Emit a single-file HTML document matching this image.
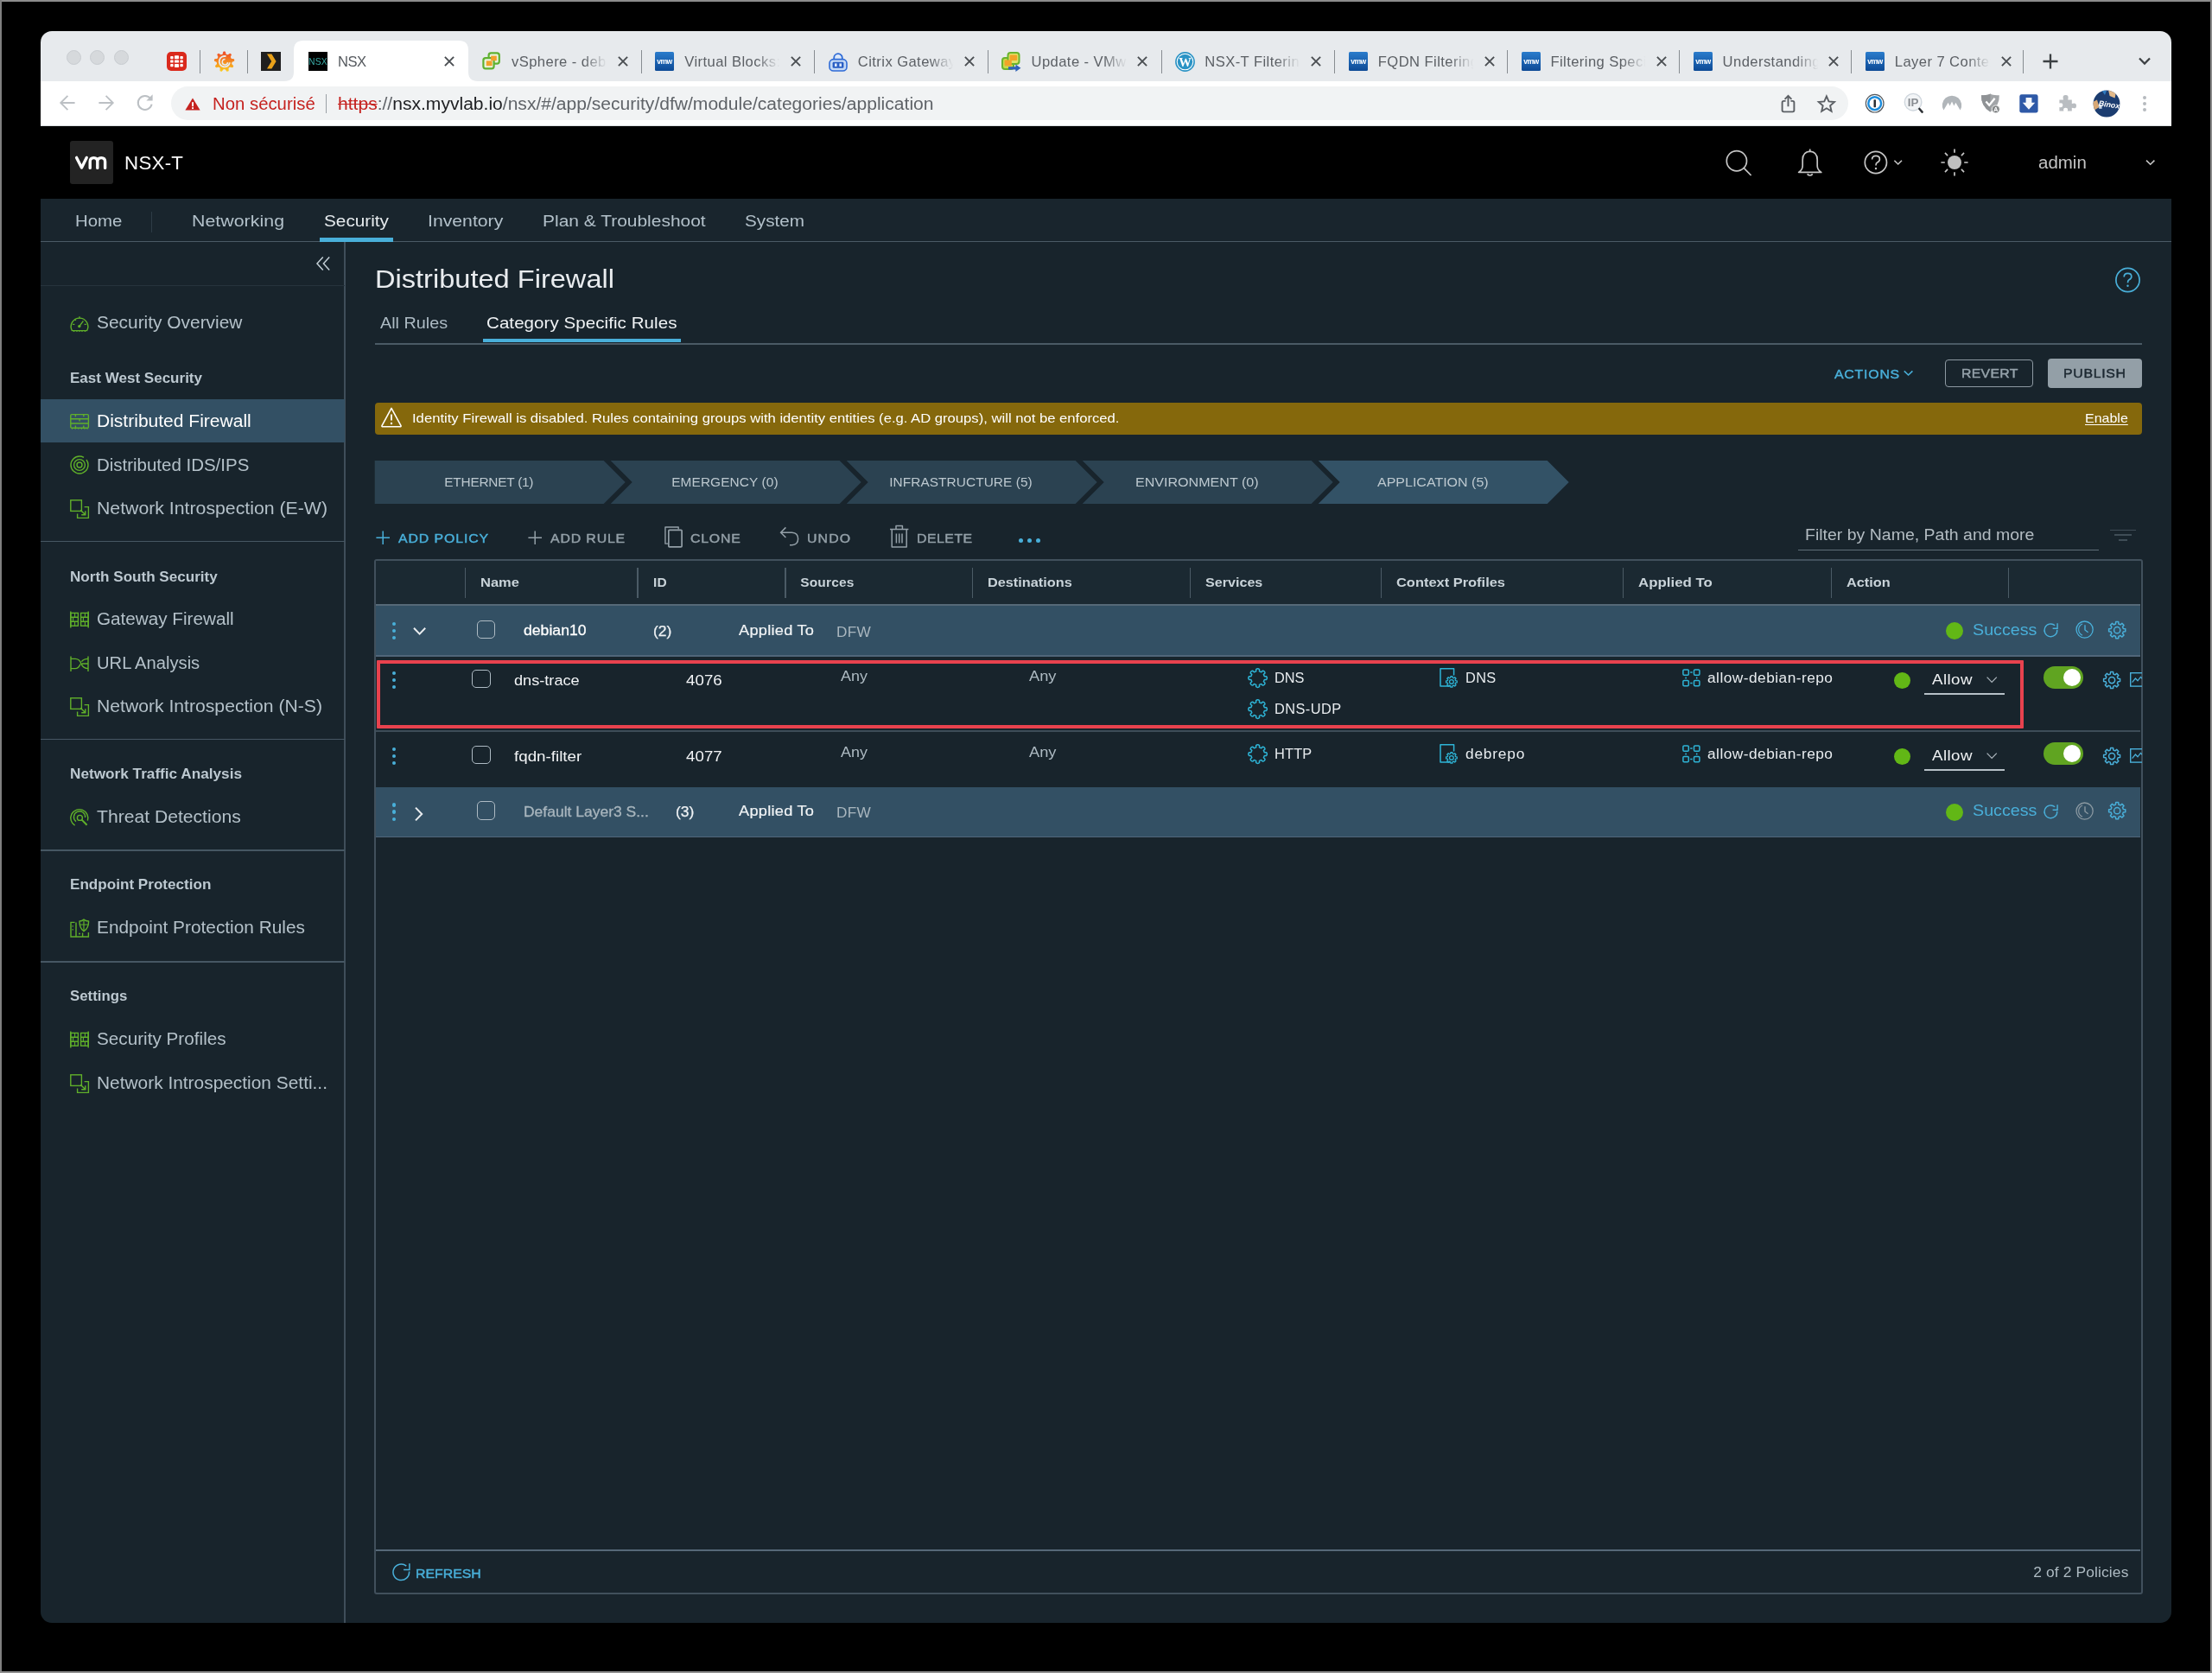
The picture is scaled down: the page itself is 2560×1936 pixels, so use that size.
<!DOCTYPE html>
<html><head><meta charset="utf-8"><title>NSX</title>
<style>
html,body{margin:0;padding:0;background:#000;}
body{width:2560px;height:1936px;position:relative;overflow:hidden;font-family:"Liberation Sans",sans-serif;}
#win{position:absolute;left:0;top:0;width:2560px;height:1936px;clip-path:inset(36px 47px 58px 47px round 13px);will-change:transform;}
#win div,#win svg,#win span.t,.edge{position:absolute;display:block;}
.t{white-space:nowrap;transform-origin:0 50%;}
svg{overflow:visible;}
</style></head>
<body>
<div class="edge" style="left:0;top:0;width:2560px;height:2px;background:#8c8c8c"></div><div class="edge" style="left:0;top:0;width:2px;height:1936px;background:#808080"></div><div class="edge" style="left:0;top:1934px;width:2560px;height:2px;background:#8f8f8f"></div><div class="edge" style="left:2558px;top:0;width:2px;height:1936px;background:#8a8a8a"></div>
<div id="win">
<div style="left:47px;top:36px;width:2466px;height:58px;background:#e7eaed;"></div>
<div style="left:47px;top:94px;width:2466px;height:52px;background:#ffffff;"></div>
<div style="left:76.6px;top:58.00000000000001px;width:15.2px;height:15.2px;border-radius:50%;background:#d6d9dc;border:0.8px solid #c8ccd0"></div>
<div style="left:104.19999999999999px;top:58.00000000000001px;width:15.2px;height:15.2px;border-radius:50%;background:#d6d9dc;border:0.8px solid #c8ccd0"></div>
<div style="left:132.2px;top:58.00000000000001px;width:15.2px;height:15.2px;border-radius:50%;background:#d6d9dc;border:0.8px solid #c8ccd0"></div>
<svg style="left:0px;top:0px;pointer-events:none" width="2560" height="146" viewBox="0 0 2560 146"><path d="M329 94 Q340 94 340 83 L340 58 Q340 47 351 47 L531 47 Q542 47 542 58 L542 83 Q542 94 553 94 Z" fill="#fff"/></svg>
<svg style="left:193px;top:60px;" width="23" height="22" viewBox="0 0 23 22"><rect x="0" y="0" width="23" height="22" rx="5" fill="#da291c"/><g fill="#fff"><rect x="4.2" y="5" width="3.4" height="3.2" rx="0.8"/><rect x="9" y="4.2" width="5" height="4" rx="0.8"/><rect x="15.4" y="5" width="3.4" height="3.2" rx="0.8"/><rect x="4.2" y="9.6" width="3.4" height="3" rx="0.6"/><rect x="9" y="9.6" width="5" height="3" rx="0.6"/><rect x="15.4" y="9.6" width="3.4" height="3" rx="0.6"/><rect x="4.2" y="14" width="3.4" height="3.2" rx="0.8"/><rect x="9" y="14" width="5" height="4" rx="0.8"/><rect x="15.4" y="14" width="3.4" height="3.2" rx="0.8"/></g></svg>
<div style="left:231.2px;top:58px;width:1.2px;height:27px;background:#878c91;"></div>
<svg style="left:248px;top:58.6px;" width="24" height="25" viewBox="0 0 24 25"><defs><linearGradient id="gf" x1="0" y1="1" x2="0" y2="0"><stop offset="0" stop-color="#fbc81a"/><stop offset="1" stop-color="#ee4a27"/></linearGradient></defs><path d="M10.0 4.2 L10.9 1.2 L12.3 1.2 L13.2 4.2 L15.7 5.1 L18.2 3.4 L19.3 4.3 L18.1 7.1 L19.4 9.4 L22.5 9.8 L22.7 11.2 L20.0 12.5 L19.5 15.1 L21.6 17.4 L20.9 18.6 L17.9 17.9 L15.9 19.6 L16.1 22.7 L14.8 23.1 L12.9 20.7 L10.3 20.7 L8.4 23.1 L7.1 22.7 L7.3 19.6 L5.3 17.9 L2.3 18.6 L1.6 17.4 L3.7 15.1 L3.2 12.5 L0.5 11.2 L0.7 9.8 L3.8 9.4 L5.1 7.1 L3.9 4.3 L5.0 3.4 L7.5 5.1 Z" fill="url(#gf)" stroke="url(#gf)" stroke-width="1.2" stroke-linejoin="round"/><path d="M13.6 6.2 A6.2 6.2 0 1 0 18 13.4" stroke="#e7eaed" stroke-width="1.9" fill="none"/><path d="M15.6 13.2 A3.2 3.2 0 1 1 12.6 9.6" stroke="#e7eaed" stroke-width="1.5" fill="none"/></svg>
<div style="left:285.9px;top:58px;width:1.2px;height:27px;background:#878c91;"></div>
<svg style="left:302px;top:60px;" width="23" height="22" viewBox="0 0 23 22"><rect width="23" height="22" fill="#1f1f1f"/><path d="M7 2.5 L12.4 2.5 L17.6 11 L12.4 19.5 L7 19.5 L12.2 11 Z" fill="#e9a21a"/></svg>
<svg style="left:357px;top:60px;" width="22" height="22" viewBox="0 0 22 22"><rect width="22" height="22" fill="#000"/><text x="11" y="14.6" font-family="Liberation Sans, sans-serif" font-size="10.4" text-anchor="middle" fill="#3aa9a4" letter-spacing="0.2">NSX</text></svg>
<span id="t1" class="t" style="letter-spacing:-0.562px;left:391px;top:61.0px;line-height:22px;font-size:16.6px;color:#55595e;font-weight:400;">NSX</span>
<svg style="left:512.8px;top:64.2px;" width="14" height="14" viewBox="0 0 14 14"><path d="M1.9000000000000004 1.9000000000000004 L12.1 12.1 M12.1 1.9000000000000004 L1.9000000000000004 12.1" stroke="#4a4e52" stroke-width="1.9" fill="none"/></svg>
<svg style="left:558.2px;top:60px;" width="23" height="24" viewBox="0 0 23 24"><rect x="7.6" y="1.4" width="12.2" height="12.2" rx="2.6" fill="#eaf4dd" stroke="#5fb130" stroke-width="2.2"/><rect x="1.4" y="7.2" width="12.2" height="12.2" rx="2.6" fill="#eaf4dd" stroke="#5fb130" stroke-width="2.2"/><rect x="10.2" y="4.6" width="6.6" height="5.6" fill="#f2a02a"/><rect x="4.8" y="10.4" width="6.8" height="5.8" fill="#f2a02a"/></svg>
<div style="left:592.0px;top:58px;width:113px;height:28px;overflow:hidden"><span id="t2" class="t" style="left:0px;top:3.4px;line-height:22px;font-size:16.6px;color:#5b5f64;letter-spacing:0.42px">vSphere - debian10</span><div style="left:83px;top:0;width:30px;height:28px;background:linear-gradient(90deg,rgba(231,234,237,0),#e7eaed 92%)"></div></div>
<svg style="left:713.8px;top:64.2px;" width="14" height="14" viewBox="0 0 14 14"><path d="M1.9000000000000004 1.9000000000000004 L12.1 12.1 M12.1 1.9000000000000004 L1.9000000000000004 12.1" stroke="#4a4e52" stroke-width="1.9" fill="none"/></svg>
<div style="left:741.6999999999999px;top:58px;width:1.2px;height:27px;background:#878c91;"></div>
<svg style="left:758px;top:60px;" width="22" height="24" viewBox="0 0 22 24"><defs><linearGradient id="vmwg" x1="0" y1="0" x2="0" y2="1"><stop offset="0" stop-color="#2a7ccc"/><stop offset="1" stop-color="#0d4a96"/></linearGradient></defs><rect width="22" height="22" rx="1.5" fill="url(#vmwg)"/><text x="11" y="13.6" font-family="Liberation Sans, sans-serif" font-size="8.6" font-weight="700" text-anchor="middle" fill="#fff" letter-spacing="-0.5">vmw</text></svg>
<div style="left:792.3px;top:58px;width:113px;height:28px;overflow:hidden"><span id="t3" class="t" style="left:0px;top:3.4px;line-height:22px;font-size:16.6px;color:#5b5f64;letter-spacing:0.42px">Virtual Blocks: VMw</span><div style="left:83px;top:0;width:30px;height:28px;background:linear-gradient(90deg,rgba(231,234,237,0),#e7eaed 92%)"></div></div>
<svg style="left:914.0999999999999px;top:64.2px;" width="14" height="14" viewBox="0 0 14 14"><path d="M1.9000000000000004 1.9000000000000004 L12.1 12.1 M12.1 1.9000000000000004 L1.9000000000000004 12.1" stroke="#4a4e52" stroke-width="1.9" fill="none"/></svg>
<div style="left:942.1999999999999px;top:58px;width:1.2px;height:27px;background:#878c91;"></div>
<svg style="left:958.5px;top:60px;" width="23" height="24" viewBox="0 0 23 24"><path d="M6.2 9.4 V7 a4.8 4.8 0 0 1 9.6 0 V9.4" fill="#dce8fa" stroke="#2f6bd6" stroke-width="1.8"/><rect x="1" y="8.6" width="20" height="13.4" rx="4.6" fill="#c5d9f5" stroke="#2f6bd6" stroke-width="1.6"/><rect x="4.6" y="11.8" width="12.8" height="7" rx="1.4" fill="#2a5fc4"/><rect x="7" y="13.4" width="2.6" height="3.6" fill="#dce8fa"/><rect x="12.4" y="13.4" width="2.6" height="3.6" fill="#dce8fa"/></svg>
<div style="left:992.8px;top:58px;width:113px;height:28px;overflow:hidden"><span id="t4" class="t" style="left:0px;top:3.4px;line-height:22px;font-size:16.6px;color:#5b5f64;letter-spacing:0.42px">Citrix Gateway</span><div style="left:83px;top:0;width:30px;height:28px;background:linear-gradient(90deg,rgba(231,234,237,0),#e7eaed 92%)"></div></div>
<svg style="left:1114.6px;top:64.2px;" width="14" height="14" viewBox="0 0 14 14"><path d="M1.9000000000000004 1.9000000000000004 L12.1 12.1 M12.1 1.9000000000000004 L1.9000000000000004 12.1" stroke="#4a4e52" stroke-width="1.9" fill="none"/></svg>
<div style="left:1142.9px;top:58px;width:1.2px;height:27px;background:#878c91;"></div>
<svg style="left:1158.5px;top:60px;" width="24" height="24" viewBox="0 0 24 24"><rect x="1" y="7" width="13" height="13" rx="3" fill="#c8d84a" stroke="#6ab32d" stroke-width="2"/><rect x="7.5" y="1" width="13" height="13" rx="3" fill="#dfe36a" stroke="#6ab32d" stroke-width="2"/><rect x="9.6" y="3.4" width="8.6" height="6.6" rx="1" fill="#f2a428"/><rect x="3.6" y="9.6" width="8.2" height="6.6" rx="1" fill="#f2a428"/><path d="M8 17.2 h8.4 v-2.6 l6 4.2 l-6 4.2 v-2.6 h-8.4 z" fill="#2e63b8"/></svg>
<div style="left:1193.5px;top:58px;width:113px;height:28px;overflow:hidden"><span id="t5" class="t" style="left:0px;top:3.4px;line-height:22px;font-size:16.6px;color:#5b5f64;letter-spacing:0.42px">Update - VMware</span><div style="left:83px;top:0;width:30px;height:28px;background:linear-gradient(90deg,rgba(231,234,237,0),#e7eaed 92%)"></div></div>
<svg style="left:1315.3px;top:64.2px;" width="14" height="14" viewBox="0 0 14 14"><path d="M1.9000000000000004 1.9000000000000004 L12.1 12.1 M12.1 1.9000000000000004 L1.9000000000000004 12.1" stroke="#4a4e52" stroke-width="1.9" fill="none"/></svg>
<div style="left:1343.7px;top:58px;width:1.2px;height:27px;background:#878c91;"></div>
<svg style="left:1359.5px;top:60px;" width="23" height="24" viewBox="0 0 23 24"><circle cx="11.5" cy="11.5" r="10.6" fill="#fff" stroke="#2a93c5" stroke-width="1.6"/><circle cx="11.5" cy="11.5" r="8.7" fill="#2a93c5"/><text x="11.5" y="16.6" font-family="Liberation Serif, serif" font-weight="700" font-size="14.6" fill="#fff" text-anchor="middle">W</text></svg>
<div style="left:1394.3px;top:58px;width:113px;height:28px;overflow:hidden"><span id="t6" class="t" style="left:0px;top:3.4px;line-height:22px;font-size:16.6px;color:#5b5f64;letter-spacing:0.42px">NSX-T Filtering</span><div style="left:83px;top:0;width:30px;height:28px;background:linear-gradient(90deg,rgba(231,234,237,0),#e7eaed 92%)"></div></div>
<svg style="left:1516.1px;top:64.2px;" width="14" height="14" viewBox="0 0 14 14"><path d="M1.9000000000000004 1.9000000000000004 L12.1 12.1 M12.1 1.9000000000000004 L1.9000000000000004 12.1" stroke="#4a4e52" stroke-width="1.9" fill="none"/></svg>
<div style="left:1544.2px;top:58px;width:1.2px;height:27px;background:#878c91;"></div>
<svg style="left:1560.5px;top:60px;" width="22" height="24" viewBox="0 0 22 24"><defs><linearGradient id="vmwg" x1="0" y1="0" x2="0" y2="1"><stop offset="0" stop-color="#2a7ccc"/><stop offset="1" stop-color="#0d4a96"/></linearGradient></defs><rect width="22" height="22" rx="1.5" fill="url(#vmwg)"/><text x="11" y="13.6" font-family="Liberation Sans, sans-serif" font-size="8.6" font-weight="700" text-anchor="middle" fill="#fff" letter-spacing="-0.5">vmw</text></svg>
<div style="left:1594.8px;top:58px;width:113px;height:28px;overflow:hidden"><span id="t7" class="t" style="left:0px;top:3.4px;line-height:22px;font-size:16.6px;color:#5b5f64;letter-spacing:0.42px">FQDN Filtering</span><div style="left:83px;top:0;width:30px;height:28px;background:linear-gradient(90deg,rgba(231,234,237,0),#e7eaed 92%)"></div></div>
<svg style="left:1716.6px;top:64.2px;" width="14" height="14" viewBox="0 0 14 14"><path d="M1.9000000000000004 1.9000000000000004 L12.1 12.1 M12.1 1.9000000000000004 L1.9000000000000004 12.1" stroke="#4a4e52" stroke-width="1.9" fill="none"/></svg>
<div style="left:1743.8000000000002px;top:58px;width:1.2px;height:27px;background:#878c91;"></div>
<svg style="left:1760.5px;top:60px;" width="22" height="24" viewBox="0 0 22 24"><defs><linearGradient id="vmwg" x1="0" y1="0" x2="0" y2="1"><stop offset="0" stop-color="#2a7ccc"/><stop offset="1" stop-color="#0d4a96"/></linearGradient></defs><rect width="22" height="22" rx="1.5" fill="url(#vmwg)"/><text x="11" y="13.6" font-family="Liberation Sans, sans-serif" font-size="8.6" font-weight="700" text-anchor="middle" fill="#fff" letter-spacing="-0.5">vmw</text></svg>
<div style="left:1794.4px;top:58px;width:113px;height:28px;overflow:hidden"><span id="t8" class="t" style="left:0px;top:3.4px;line-height:22px;font-size:16.6px;color:#5b5f64;letter-spacing:0.42px">Filtering Specific</span><div style="left:83px;top:0;width:30px;height:28px;background:linear-gradient(90deg,rgba(231,234,237,0),#e7eaed 92%)"></div></div>
<svg style="left:1916.2px;top:64.2px;" width="14" height="14" viewBox="0 0 14 14"><path d="M1.9000000000000004 1.9000000000000004 L12.1 12.1 M12.1 1.9000000000000004 L1.9000000000000004 12.1" stroke="#4a4e52" stroke-width="1.9" fill="none"/></svg>
<div style="left:1943.0px;top:58px;width:1.2px;height:27px;background:#878c91;"></div>
<svg style="left:1959.5px;top:60px;" width="22" height="24" viewBox="0 0 22 24"><defs><linearGradient id="vmwg" x1="0" y1="0" x2="0" y2="1"><stop offset="0" stop-color="#2a7ccc"/><stop offset="1" stop-color="#0d4a96"/></linearGradient></defs><rect width="22" height="22" rx="1.5" fill="url(#vmwg)"/><text x="11" y="13.6" font-family="Liberation Sans, sans-serif" font-size="8.6" font-weight="700" text-anchor="middle" fill="#fff" letter-spacing="-0.5">vmw</text></svg>
<div style="left:1993.6px;top:58px;width:113px;height:28px;overflow:hidden"><span id="t9" class="t" style="left:0px;top:3.4px;line-height:22px;font-size:16.6px;color:#5b5f64;letter-spacing:0.42px">Understanding</span><div style="left:83px;top:0;width:30px;height:28px;background:linear-gradient(90deg,rgba(231,234,237,0),#e7eaed 92%)"></div></div>
<svg style="left:2115.4px;top:64.2px;" width="14" height="14" viewBox="0 0 14 14"><path d="M1.9000000000000004 1.9000000000000004 L12.1 12.1 M12.1 1.9000000000000004 L1.9000000000000004 12.1" stroke="#4a4e52" stroke-width="1.9" fill="none"/></svg>
<div style="left:2142.2000000000003px;top:58px;width:1.2px;height:27px;background:#878c91;"></div>
<svg style="left:2158.5px;top:60px;" width="22" height="24" viewBox="0 0 22 24"><defs><linearGradient id="vmwg" x1="0" y1="0" x2="0" y2="1"><stop offset="0" stop-color="#2a7ccc"/><stop offset="1" stop-color="#0d4a96"/></linearGradient></defs><rect width="22" height="22" rx="1.5" fill="url(#vmwg)"/><text x="11" y="13.6" font-family="Liberation Sans, sans-serif" font-size="8.6" font-weight="700" text-anchor="middle" fill="#fff" letter-spacing="-0.5">vmw</text></svg>
<div style="left:2192.8px;top:58px;width:113px;height:28px;overflow:hidden"><span id="t10" class="t" style="left:0px;top:3.4px;line-height:22px;font-size:16.6px;color:#5b5f64;letter-spacing:0.42px">Layer 7 Context</span><div style="left:83px;top:0;width:30px;height:28px;background:linear-gradient(90deg,rgba(231,234,237,0),#e7eaed 92%)"></div></div>
<svg style="left:2314.6000000000004px;top:64.2px;" width="14" height="14" viewBox="0 0 14 14"><path d="M1.9000000000000004 1.9000000000000004 L12.1 12.1 M12.1 1.9000000000000004 L1.9000000000000004 12.1" stroke="#4a4e52" stroke-width="1.9" fill="none"/></svg>
<div style="left:2341.3px;top:58px;width:1.2px;height:27px;background:#878c91;"></div>
<svg style="left:2363px;top:61px;" width="20" height="20" viewBox="0 0 20 20"><path d="M10 1.5 V18.5 M1.5 10 H18.5" stroke="#3c4043" stroke-width="2.3" fill="none"/></svg>
<svg style="left:2474px;top:65px;" width="16" height="12" viewBox="0 0 16 12"><path d="M2 2.5 L8 8.6 L14 2.5" stroke="#3c4043" stroke-width="2.2" fill="none"/></svg>
<svg style="left:68px;top:108.4px;" width="20" height="22" viewBox="0 0 20 22"><path d="M18.6 11 H2.6 M10.4 2.8 L2.2 11 L10.4 19.2" stroke="#bcc0c4" stroke-width="1.8" fill="none"/></svg>
<svg style="left:113px;top:108.4px;" width="20" height="22" viewBox="0 0 20 22"><path d="M1.4 11 H17.4 M9.6 2.8 L17.8 11 L9.6 19.2" stroke="#bcc0c4" stroke-width="1.8" fill="none"/></svg>
<svg style="left:157px;top:107.4px;" width="22" height="24" viewBox="0 0 22 24"><path d="M17.2 7.2 A8 8 0 1 0 18.6 13.6" stroke="#bcc0c4" stroke-width="2" fill="none"/><path d="M19.6 2.2 V9.4 H12.4 Z" fill="#bcc0c4"/></svg>
<div style="left:197.5px;top:100.4px;width:1941.5px;height:39px;background:#f1f3f4;border-radius:19.5px"></div>
<svg style="left:214px;top:113px;" width="18" height="15" viewBox="0 0 18 15"><path d="M9 0.6 L17.6 14.6 H0.4 Z" fill="#c5221f"/><rect x="8.1" y="5.2" width="1.9" height="5" fill="#fff"/><rect x="8.1" y="11.2" width="1.9" height="1.9" fill="#fff"/></svg>
<span id="t11" class="t" style="transform:scaleX(1.0380);left:246px;top:107.9px;line-height:25px;font-size:19.6px;color:#c5221f;font-weight:400;">Non sécurisé</span>
<div style="left:376.6px;top:109px;width:1.5px;height:21.5px;background:#9aa0a6;"></div>
<span id="t12" class="t" style="transform:scaleX(1.0748);left:391px;top:107.9px;line-height:25px;font-size:19.6px;color:#5f6368;font-weight:400;"><span style="color:#c5221f;text-decoration:line-through">https</span><span style="color:#5f6368">://</span><span style="color:#202124">nsx.myvlab.io</span><span style="color:#5f6368">/nsx/#/app/security/dfw/module/categories/application</span></span>
<svg style="left:2058px;top:106px;" width="24" height="28" viewBox="0 0 24 28"><path d="M8.6 10.9 H6.4 Q4.6 10.9 4.6 12.7 V21.6 Q4.6 23.4 6.4 23.4 H16.6 Q18.4 23.4 18.4 21.6 V12.7 Q18.4 10.9 16.6 10.9 H14.4" stroke="#5b5f64" stroke-width="1.9" fill="none"/><path d="M11.5 17.2 V5.4 M7.6 8.8 L11.5 4.9 L15.4 8.8" stroke="#5b5f64" stroke-width="1.9" fill="none"/></svg>
<svg style="left:2101px;top:107px;" width="26" height="25" viewBox="0 0 26 25"><path d="M12.9 4.4 L15.5 10.4 L22 11 L17.1 15.3 L18.6 21.7 L12.9 18.3 L7.2 21.7 L8.7 15.3 L3.8 11 L10.3 10.4 Z" stroke="#5b5f64" stroke-width="1.9" fill="none" stroke-linejoin="miter"/></svg>
<svg style="left:2157px;top:107px;" width="26" height="26" viewBox="0 0 26 26"><circle cx="12.7" cy="12.7" r="10.3" fill="#fff" stroke="#55595d" stroke-width="1.2"/><circle cx="12.7" cy="12.7" r="7.4" fill="#fff" stroke="#1a8bdc" stroke-width="2.4"/><rect x="11.5" y="8.2" width="2.5" height="9" rx="0.6" fill="#2b2f33"/></svg>
<svg style="left:2199px;top:104px;" width="30" height="30" viewBox="0 0 30 30"><circle cx="15.1" cy="14.2" r="9.8" fill="#f3f5f7" stroke="#cfd6dd" stroke-width="1.4"/><text x="15.2" y="19" font-family="Liberation Sans, sans-serif" font-size="13.4" font-weight="700" text-anchor="middle" fill="#8a8e93">IP</text><path d="M22.4 22 L25.6 25.6" stroke="#2e3236" stroke-width="2.6" stroke-linecap="round"/></svg>
<svg style="left:2247px;top:109px;" width="24" height="20" viewBox="0 0 24 20"><path d="M2.4 18.6 A11.2 11.2 0 1 1 21.6 18.6 L16.4 9.8 L14.4 13.4 L12 8.6 L9.6 13.4 L7.6 9.8 Z" fill="#b1b6ba"/></svg>
<svg style="left:2291px;top:107px;" width="26" height="26" viewBox="0 0 26 26"><path d="M2 3.2 Q9.6 3.6 12.4 1.6 Q15.2 3.6 22.8 3.2 Q23.4 15.6 12.4 22.4 Q1.4 15.6 2 3.2 Z" fill="#a2a5a8"/><path d="M2 3.2 Q9.6 3.6 12.4 1.6 V22.4 Q1.4 15.6 2 3.2 Z" fill="#8f9295"/><path d="M7.4 10.6 L11.2 14.8 L17.6 6.8" stroke="#fff" stroke-width="2.3" fill="none"/><circle cx="18.8" cy="19.4" r="4.5" fill="#858889" stroke="#fff" stroke-width="0.8"/><text x="18.8" y="22" font-family="Liberation Sans, sans-serif" font-size="7" font-weight="700" text-anchor="middle" fill="#fff">A</text></svg>
<svg style="left:2337px;top:108.6px;" width="22" height="22" viewBox="0 0 22 22"><rect x="0.3" y="0.3" width="21.3" height="21.3" rx="2.4" fill="#2e59a7"/><path d="M7.6 4 H14.4 V9.8 H18.2 L11 17.8 L3.8 9.8 H7.6 Z" fill="#f4f7fb"/></svg>
<svg style="left:2382px;top:109px;" width="22" height="21" viewBox="0 0 22 21"><path d="M1.4 6.4 H6 Q4.4 1 8.6 1 Q12.8 1 11.2 6.4 H15.8 V11 Q21 9.4 21 13.4 Q21 17.4 15.8 15.8 V19.6 H10.8 Q12 15.8 8.6 15.8 Q5.2 15.8 6.4 19.6 H1.4 V15 Q5.4 16 5.4 12.8 Q5.4 9.6 1.4 10.6 Z" fill="#b9bdc1"/></svg>
<svg style="left:2421.5px;top:103.7px;" width="32" height="32" viewBox="0 0 32 32"><defs><clipPath id="avc"><circle cx="16" cy="16" r="15.4"/></clipPath></defs><circle cx="16" cy="16" r="15.4" fill="#1c3d70"/><g clip-path="url(#avc)"><path d="M0 14 L5 11.6 L7.6 20 L1 24 Z" fill="#d9a874"/><path d="M18 0 L27 2 L25.6 9.4 L19.6 7 Z" fill="#e2b98a"/><path d="M10 0 L16 1 L14 6 Z" fill="#2f7bc0"/><rect x="7.2" y="17.2" width="3.4" height="4.6" fill="#c9d6e6"/></g><text x="19.2" y="19.6" font-family="Liberation Sans, sans-serif" font-size="8.8" font-style="italic" font-weight="700" text-anchor="middle" fill="#fff" transform="rotate(8 16 16)">Binox</text></svg>
<div style="left:2479.6000000000004px;top:110.6px;width:4.4px;height:4.4px;border-radius:50%;background:#b6babe"></div>
<div style="left:2479.6000000000004px;top:117.7px;width:4.4px;height:4.4px;border-radius:50%;background:#b6babe"></div>
<div style="left:2479.6000000000004px;top:124.7px;width:4.4px;height:4.4px;border-radius:50%;background:#b6babe"></div>
<div style="left:47px;top:145px;width:2466px;height:1px;background:#dcdfe2;"></div>
<div style="left:47px;top:146px;width:2466px;height:84px;background:#000000;"></div>
<div style="left:81px;top:163px;width:50px;height:50px;background:#232323;border-radius:3px"></div>
<svg style="left:81px;top:163px;" width="50" height="50" viewBox="0 0 50 50"><path d="M7.6 19.4 L13.5 31 L19.2 19.4" stroke="#fff" stroke-width="3.4" fill="none" stroke-linecap="round" stroke-linejoin="round"/><path d="M23.2 31.4 V24 Q23.2 19.6 27.5 19.6 Q31.8 19.6 31.8 24 V31.4 M31.8 24 Q31.8 19.6 36.2 19.6 Q40.6 19.6 40.6 24 V31.4" stroke="#fff" stroke-width="3.4" fill="none" stroke-linecap="round" stroke-linejoin="round"/></svg>
<span id="t13" class="t" style="letter-spacing:0.273px;left:144px;top:173.8px;line-height:29px;font-size:22.3px;color:#fafafa;font-weight:400;">NSX-T</span>
<svg style="left:1994px;top:170px;" width="40" height="40" viewBox="0 0 40 40"><circle cx="15.9" cy="16.2" r="11.6" stroke="#c6c6c6" stroke-width="1.7" fill="none"/><path d="M24.4 24.6 L32.6 33" stroke="#c6c6c6" stroke-width="1.7" fill="none"/></svg>
<svg style="left:2078px;top:170px;" width="34" height="36" viewBox="0 0 34 36"><path d="M16.7 2.4 V5.2 M16.7 5.2 Q8.2 6 8.2 15 V22 Q8.2 26.4 3.6 29.4 H29.8 Q25.2 26.4 25.2 22 V15 Q25.2 6 16.7 5.2 Z" stroke="#c6c6c6" stroke-width="1.7" fill="none" stroke-linejoin="round"/><path d="M13.6 31.4 Q16.7 34.6 19.8 31.4" stroke="#c6c6c6" stroke-width="1.7" fill="none"/></svg>
<svg style="left:2156px;top:173px;" width="50" height="30" viewBox="0 0 50 30"><circle cx="14.9" cy="15" r="12.6" stroke="#c6c6c6" stroke-width="1.7" fill="none"/><path d="M10.6 11.6 Q10.6 7.4 15 7.4 Q19.4 7.4 19.4 11.2 Q19.4 13.6 16.6 15 Q15 15.8 15 18.4" stroke="#c6c6c6" stroke-width="1.7" fill="none"/><circle cx="15" cy="22" r="1.2" fill="#c6c6c6"/><path d="M36.4 12.8 L40.7 17 L45 12.8" stroke="#c6c6c6" stroke-width="1.6" fill="none"/></svg>
<svg style="left:2245.8px;top:172px;" width="32" height="32" viewBox="0 0 32 32"><circle cx="16" cy="16" r="8" fill="#bfbfbf"/><path d="M27.20 16.00 L31.60 16.00 M23.92 23.92 L27.03 27.03 M16.00 27.20 L16.00 31.60 M8.08 23.92 L4.97 27.03 M4.80 16.00 L0.40 16.00 M8.08 8.08 L4.97 4.97 M16.00 4.80 L16.00 0.40 M23.92 8.08 L27.03 4.97 " stroke="#c6c6c6" stroke-width="1.7" fill="none"/></svg>
<span id="t14" class="t" style="transform:scaleX(1.0454);left:2359.2px;top:176.3px;line-height:25px;font-size:19.6px;color:#c4c4c4;font-weight:400;">admin</span>
<svg style="left:2482px;top:183px;" width="14" height="10" viewBox="0 0 14 10"><path d="M2 2.6 L6.7 7.2 L11.4 2.6" stroke="#c6c6c6" stroke-width="1.6" fill="none"/></svg>
<div style="left:47px;top:230px;width:2466px;height:50px;background:#19252d;"></div>
<div style="left:47px;top:279px;width:2466px;height:1.4px;background:#4a5a65;"></div>
<span id="t15" class="t" style="transform:scaleX(1.0628);left:86.9px;top:243.0px;line-height:25px;font-size:19.2px;color:#b3c1ca;font-weight:400;">Home</span>
<div style="left:174.6px;top:244.6px;width:1.2px;height:24px;background:#2d3c46;"></div>
<span id="t16" class="t" style="letter-spacing:0.046px;transform:scaleX(1.1100);left:221.7px;top:243.0px;line-height:25px;font-size:19.2px;color:#b3c1ca;font-weight:400;">Networking</span>
<span id="t17" class="t" style="transform:scaleX(1.0821);left:374.8px;top:243.0px;line-height:25px;font-size:19.2px;color:#e6ebee;font-weight:400;">Security</span>
<span id="t18" class="t" style="transform:scaleX(1.1059);left:495.2px;top:243.0px;line-height:25px;font-size:19.2px;color:#b3c1ca;font-weight:400;">Inventory</span>
<span id="t19" class="t" style="transform:scaleX(1.0919);left:627.9px;top:243.0px;line-height:25px;font-size:19.2px;color:#b3c1ca;font-weight:400;">Plan &amp; Troubleshoot</span>
<span id="t20" class="t" style="transform:scaleX(1.0784);left:861.7px;top:243.0px;line-height:25px;font-size:19.2px;color:#b3c1ca;font-weight:400;">System</span>
<div style="left:370px;top:275.2px;width:85px;height:4.8px;background:#49afd9;"></div>
<div style="left:47px;top:280.4px;width:2466px;height:1598px;background:#18242c;"></div>
<div style="left:398.2px;top:280.4px;width:2px;height:1598px;background:#3f4e5a;"></div>
<svg style="left:364.6px;top:296.2px;" width="20" height="18" viewBox="0 0 20 18"><path d="M8.8 1.6 L2 9 L8.8 16.4 M16.2 1.6 L9.4 9 L16.2 16.4" stroke="#c3cfd6" stroke-width="1.5" fill="none"/></svg>
<div style="left:47px;top:330.2px;width:352px;height:1px;background:#26333c;"></div>
<svg style="left:81px;top:363.0px;" width="22" height="22" viewBox="0 0 22 22"><path d="M2.4 19.6 A9.8 9.8 0 1 1 19.6 19.6 Z" stroke="#60b02a" stroke-width="1.4" fill="none" stroke-linejoin="round"/><path d="M11 14.4 L15.4 8.4" stroke="#60b02a" stroke-width="1.4" fill="none"/><circle cx="10.8" cy="14.6" r="1.7" fill="#60b02a"/><path d="M11 3.2 V5.6 M3.2 12.4 H5.4 M16.6 12.4 H18.8 M5.4 6.4 L6.8 7.8" stroke="#60b02a" stroke-width="1.4" fill="none"/><path d="M4.6 19.6 V21 M8 19.6 V21 M11 19.6 V21 M14 19.6 V21 M17.4 19.6 V21" stroke="#60b02a" stroke-width="1.2"/></svg>
<span id="t21" class="t" style="transform:scaleX(1.0666);left:112.2px;top:361.1px;line-height:25px;font-size:19.6px;color:#b4c1c9;font-weight:400;">Security Overview</span>
<span id="t22" class="t" style="transform:scaleX(1.0519);left:81px;top:426.9px;line-height:21px;font-size:16.2px;color:#bcc8d0;font-weight:700;">East West Security</span>
<div style="left:47px;top:462px;width:352px;height:50px;background:#335064;"></div>
<svg style="left:81px;top:477.0px;" width="22" height="22" viewBox="0 0 22 22"><rect x="0.8" y="2.6" width="20.6" height="15.6" rx="1.2" stroke="#60b02a" stroke-width="1.4" fill="none"/><path d="M0.8 7.8 H21.4 M0.8 13 H21.4 M6.4 2.6 V5.2 M15.8 2.6 V5.2 M11.1 7.8 V10.6 M6.4 15.4 V18.2 M15.8 15.4 V18.2" stroke="#60b02a" stroke-width="1.4" fill="none"/><path d="M2.6 18.2 V19.8 M6.2 18.2 V19.8 M9.8 18.2 V19.8 M13.4 18.2 V19.8 M17 18.2 V19.8 M20 18.2 V19.8" stroke="#60b02a" stroke-width="1.1"/></svg>
<span id="t23" class="t" style="transform:scaleX(1.0732);left:112.2px;top:475.1px;line-height:25px;font-size:19.6px;color:#ffffff;font-weight:400;">Distributed Firewall</span>
<svg style="left:81px;top:527.4px;" width="22" height="22" viewBox="0 0 22 22"><circle cx="11" cy="11" r="10" stroke="#60b02a" stroke-width="1.4" fill="none" stroke-dasharray="52 4"/><circle cx="11" cy="11" r="6.4" stroke="#60b02a" stroke-width="1.4" fill="none"/><circle cx="11" cy="11" r="3" stroke="#60b02a" stroke-width="1.4" fill="none"/></svg>
<span id="t24" class="t" style="transform:scaleX(1.0445);left:112.2px;top:525.5px;line-height:25px;font-size:19.6px;color:#b4c1c9;font-weight:400;">Distributed IDS/IPS</span>
<svg style="left:81px;top:577.6px;" width="22" height="22" viewBox="0 0 22 22"><rect x="0.8" y="0.8" width="12.6" height="12.6" stroke="#60b02a" stroke-width="1.4" fill="none"/><path d="M16.6 8.6 H21.4 V21.4 H8.6 V16.4" stroke="#60b02a" stroke-width="1.4" fill="none"/><path d="M12.2 12.2 L17.6 17.6 M17.8 13.2 V17.8 H13.2" stroke="#60b02a" stroke-width="1.4" fill="none"/></svg>
<span id="t25" class="t" style="transform:scaleX(1.0850);left:112.2px;top:575.7px;line-height:25px;font-size:19.6px;color:#b4c1c9;font-weight:400;">Network Introspection (E-W)</span>
<div style="left:47px;top:625.9px;width:352px;height:1.5px;background:#465763;"></div>
<span id="t26" class="t" style="transform:scaleX(1.0544);left:81px;top:656.8px;line-height:21px;font-size:16.2px;color:#bcc8d0;font-weight:700;">North South Security</span>
<svg style="left:81px;top:706.3px;" width="22" height="22" viewBox="0 0 22 22"><rect x="0.8" y="3.4" width="8.6" height="14.8" stroke="#60b02a" stroke-width="1.4" fill="none"/><rect x="12.6" y="3.4" width="8.6" height="14.8" stroke="#60b02a" stroke-width="1.4" fill="none"/><path d="M0.8 8.3 H9.4 M0.8 13.3 H9.4 M12.6 8.3 H21.2 M12.6 13.3 H21.2" stroke="#60b02a" stroke-width="1.4" fill="none"/><path d="M5.6 3.4 V8.3 M3.6 8.3 V13.3 M5.6 13.3 V18.2 M17.4 3.4 V8.3 M15.4 8.3 V13.3 M17.4 13.3 V18.2" stroke="#60b02a" stroke-width="1.1" fill="none"/><path d="M0.8 1.6 V20.6 M21.2 1.6 V20.6" stroke="#60b02a" stroke-width="1.4" fill="none"/></svg>
<span id="t27" class="t" style="transform:scaleX(1.0555);left:112.2px;top:704.4px;line-height:25px;font-size:19.6px;color:#b4c1c9;font-weight:400;">Gateway Firewall</span>
<svg style="left:81px;top:756.7px;" width="22" height="22" viewBox="0 0 22 22"><path d="M1 2.4 V20 M21 2.4 V20" stroke="#60b02a" stroke-width="1.4" fill="none"/><path d="M1 5.4 H6 Q11 5.4 13 11 Q15 16.6 21 16.6 M1 16.6 H6 Q10 16.6 12 11.4 M13.4 8.6 Q15.6 5.4 21 5.4 M14 11 H21" stroke="#60b02a" stroke-width="1.4" fill="none"/></svg>
<span id="t28" class="t" style="transform:scaleX(1.0294);left:112.2px;top:754.8px;line-height:25px;font-size:19.6px;color:#b4c1c9;font-weight:400;">URL Analysis</span>
<svg style="left:81px;top:807.0px;" width="22" height="22" viewBox="0 0 22 22"><rect x="0.8" y="0.8" width="12.6" height="12.6" stroke="#60b02a" stroke-width="1.4" fill="none"/><path d="M16.6 8.6 H21.4 V21.4 H8.6 V16.4" stroke="#60b02a" stroke-width="1.4" fill="none"/><path d="M12.2 12.2 L17.6 17.6 M17.8 13.2 V17.8 H13.2" stroke="#60b02a" stroke-width="1.4" fill="none"/></svg>
<span id="t29" class="t" style="transform:scaleX(1.0797);left:112.2px;top:805.1px;line-height:25px;font-size:19.6px;color:#b4c1c9;font-weight:400;">Network Introspection (N-S)</span>
<div style="left:47px;top:854.9px;width:352px;height:1.5px;background:#465763;"></div>
<span id="t30" class="t" style="transform:scaleX(1.0618);left:81px;top:885.3px;line-height:21px;font-size:16.2px;color:#bcc8d0;font-weight:700;">Network Traffic Analysis</span>
<svg style="left:81px;top:934.6px;" width="22" height="22" viewBox="0 0 22 22"><path d="M5.6 20.2 A10 10 0 1 1 20.4 14.6" stroke="#60b02a" stroke-width="1.4" fill="none"/><path d="M7 15.6 A6.6 6.6 0 1 1 17.6 11" stroke="#60b02a" stroke-width="1.4" fill="none"/><circle cx="11.4" cy="11.4" r="3" stroke="#60b02a" stroke-width="1.4" fill="none"/><path d="M13.6 13.6 L19.6 19.8" stroke="#60b02a" stroke-width="2"/></svg>
<span id="t31" class="t" style="transform:scaleX(1.0779);left:112.2px;top:932.7px;line-height:25px;font-size:19.6px;color:#b4c1c9;font-weight:400;">Threat Detections</span>
<div style="left:47px;top:983.0999999999999px;width:352px;height:1.5px;background:#465763;"></div>
<span id="t32" class="t" style="transform:scaleX(1.0564);left:81px;top:1013.3px;line-height:21px;font-size:16.2px;color:#bcc8d0;font-weight:700;">Endpoint Protection</span>
<svg style="left:81px;top:1063.3px;" width="22" height="22" viewBox="0 0 22 22"><path d="M5.6 4.4 H1 V21 H21.4 V16" stroke="#60b02a" stroke-width="1.4" fill="none"/><path d="M7 21 V4.4 M14.6 21 V16.6" stroke="#60b02a" stroke-width="1.4" fill="none"/><path d="M11 3 Q14 3 16 1 Q18 3 21.6 3 Q21.6 11.4 16 14.6 Q11 11.4 11 3 Z" stroke="#60b02a" stroke-width="1.4" fill="none" stroke-linejoin="round"/><path d="M16 1.4 V14 M11.4 7 H21.2" stroke="#60b02a" stroke-width="1.2"/><circle cx="11" cy="17.6" r="1" fill="#60b02a"/><path d="M3.2 8 V9.6 M3.2 12 V13.6" stroke="#60b02a" stroke-width="1.2"/></svg>
<span id="t33" class="t" style="transform:scaleX(1.0637);left:112.2px;top:1061.4px;line-height:25px;font-size:19.6px;color:#b4c1c9;font-weight:400;">Endpoint Protection Rules</span>
<div style="left:47px;top:1112.2px;width:352px;height:1.5px;background:#465763;"></div>
<span id="t34" class="t" style="transform:scaleX(1.0382);left:81px;top:1142.3px;line-height:21px;font-size:16.2px;color:#bcc8d0;font-weight:700;">Settings</span>
<svg style="left:81px;top:1192.0px;" width="22" height="22" viewBox="0 0 22 22"><rect x="0.8" y="3.4" width="8.6" height="14.8" stroke="#60b02a" stroke-width="1.4" fill="none"/><rect x="12.6" y="3.4" width="8.6" height="14.8" stroke="#60b02a" stroke-width="1.4" fill="none"/><path d="M0.8 8.3 H9.4 M0.8 13.3 H9.4 M12.6 8.3 H21.2 M12.6 13.3 H21.2" stroke="#60b02a" stroke-width="1.4" fill="none"/><path d="M5.6 3.4 V8.3 M3.6 8.3 V13.3 M5.6 13.3 V18.2 M17.4 3.4 V8.3 M15.4 8.3 V13.3 M17.4 13.3 V18.2" stroke="#60b02a" stroke-width="1.1" fill="none"/><path d="M0.8 1.6 V20.6 M21.2 1.6 V20.6" stroke="#60b02a" stroke-width="1.4" fill="none"/></svg>
<span id="t35" class="t" style="transform:scaleX(1.0568);left:112.2px;top:1190.1px;line-height:25px;font-size:19.6px;color:#b4c1c9;font-weight:400;">Security Profiles</span>
<svg style="left:81px;top:1242.6px;" width="22" height="22" viewBox="0 0 22 22"><rect x="0.8" y="0.8" width="12.6" height="12.6" stroke="#60b02a" stroke-width="1.4" fill="none"/><path d="M16.6 8.6 H21.4 V21.4 H8.6 V16.4" stroke="#60b02a" stroke-width="1.4" fill="none"/><path d="M12.2 12.2 L17.6 17.6 M17.8 13.2 V17.8 H13.2" stroke="#60b02a" stroke-width="1.4" fill="none"/></svg>
<span id="t36" class="t" style="transform:scaleX(1.0659);left:112.2px;top:1240.7px;line-height:25px;font-size:19.6px;color:#b4c1c9;font-weight:400;">Network Introspection Setti...</span>
<span id="t37" class="t" style="transform:scaleX(1.1008);left:434px;top:303.9px;line-height:38px;font-size:29.6px;color:#e9ecef;font-weight:400;">Distributed Firewall</span>
<svg style="left:2446px;top:308px;" width="32" height="32" viewBox="0 0 32 32"><circle cx="16.5" cy="16" r="13.6" stroke="#49afd9" stroke-width="1.7" fill="none"/><path d="M12.2 12.6 Q12.2 8.4 16.5 8.4 Q20.8 8.4 20.8 12 Q20.8 14.4 18 15.8 Q16.5 16.6 16.5 19.2" stroke="#49afd9" stroke-width="1.7" fill="none"/><circle cx="16.5" cy="22.8" r="1.2" fill="#49afd9"/></svg>
<span id="t38" class="t" style="transform:scaleX(1.0712);left:439.6px;top:362.3px;line-height:24px;font-size:18.5px;color:#adbbc4;font-weight:400;">All Rules</span>
<span id="t39" class="t" style="letter-spacing:0.052px;transform:scaleX(1.1100);left:563px;top:362.3px;line-height:24px;font-size:18.5px;color:#f0f3f5;font-weight:400;">Category Specific Rules</span>
<div style="left:434px;top:397.3px;width:2045px;height:1.4px;background:#4a5a65;"></div>
<div style="left:558.9px;top:392.3px;width:229.1px;height:4.2px;background:#49afd9;"></div>
<span id="t40" class="t" style="letter-spacing:0.765px;transform:scaleX(1.0300);left:2122.8px;top:422.5px;line-height:20px;font-size:15.4px;color:#49afd9;font-weight:400;-webkit-text-stroke:0.45px currentColor;">ACTIONS</span>
<svg style="left:2202px;top:427.2px;" width="14" height="10" viewBox="0 0 14 10"><path d="M1.8 2.4 L6.6 7 L11.4 2.4" stroke="#49afd9" stroke-width="1.6" fill="none"/></svg>
<div style="left:2250.7px;top:415.6px;width:100.4px;height:30px;border:1.6px solid #8d99a2;border-radius:4px"></div>
<span id="t41" class="t" style="letter-spacing:0.268px;transform:scaleX(1.0300);left:2269.5px;top:422.3px;line-height:20px;font-size:15.4px;color:#96a3ab;font-weight:400;-webkit-text-stroke:0.45px currentColor;">REVERT</span>
<div style="left:2370px;top:415.4px;width:109px;height:33.3px;background:#939fa7;border-radius:4px"></div>
<span id="t42" class="t" style="letter-spacing:0.671px;transform:scaleX(1.0300);left:2388.4px;top:422.3px;line-height:20px;font-size:15.4px;color:#1c2831;font-weight:400;-webkit-text-stroke:0.45px currentColor;">PUBLISH</span>
<div style="left:434px;top:466.2px;width:2045px;height:36.4px;background:#85680c;border-radius:4px"></div>
<svg style="left:440px;top:470.4px;" width="26" height="26" viewBox="0 0 26 26"><path d="M13 2.4 L24 22.6 Q24.4 23.8 23 23.8 H3 Q1.6 23.8 2 22.6 Z" stroke="#fff" stroke-width="1.6" fill="none" stroke-linejoin="round"/><path d="M13 9.4 V16.6" stroke="#fff" stroke-width="1.8"/><circle cx="13" cy="20" r="1.2" fill="#fff"/></svg>
<span id="t43" class="t" style="transform:scaleX(1.1092);left:476.7px;top:474.1px;line-height:20px;font-size:15px;color:#ffffff;font-weight:400;">Identity Firewall is disabled. Rules containing groups with identity entities (e.g. AD groups), will not be enforced.</span>
<span id="t44" class="t" style="transform:scaleX(1.0660);left:2412.7px;top:474.1px;line-height:20px;font-size:15px;color:#ffffff;font-weight:400;text-decoration:underline;text-underline-offset:2px;">Enable</span>
<svg style="left:0px;top:0px;" width="2560" height="600" viewBox="0 0 2560 600"><path d="M433.7 533 L698.7 533 L723.7 558 L698.7 583 L433.7 583 Z" fill="#2b4251"/><path d="M706.7 533 L971.7 533 L996.7 558 L971.7 583 L706.7 583 L731.7 558 Z" fill="#2b4251"/><path d="M979.7 533 L1244.7 533 L1269.7 558 L1244.7 583 L979.7 583 L1004.7 558 Z" fill="#2b4251"/><path d="M1252.7 533 L1517.7 533 L1542.7 558 L1517.7 583 L1252.7 583 L1277.7 558 Z" fill="#2b4251"/><path d="M1525.7 533 L1790.7 533 L1815.7 558 L1790.7 583 L1525.7 583 L1550.7 558 Z" fill="#335266"/></svg>
<span id="t45" class="t" style="letter-spacing:-0.233px;left:514.3px;top:547.7px;line-height:20px;font-size:15.4px;color:#bcc8cf;font-weight:400;">ETHERNET (1)</span>
<span id="t46" class="t" style="letter-spacing:0.115px;left:777.2px;top:547.7px;line-height:20px;font-size:15.4px;color:#bcc8cf;font-weight:400;">EMERGENCY (0)</span>
<span id="t47" class="t" style="letter-spacing:0.078px;left:1029.2px;top:547.7px;line-height:20px;font-size:15.4px;color:#bcc8cf;font-weight:400;">INFRASTRUCTURE (5)</span>
<span id="t48" class="t" style="transform:scaleX(1.0443);left:1313.6px;top:547.7px;line-height:20px;font-size:15.4px;color:#bcc8cf;font-weight:400;">ENVIRONMENT (0)</span>
<span id="t49" class="t" style="transform:scaleX(1.0395);left:1593.6px;top:547.7px;line-height:20px;font-size:15.4px;color:#bcc8cf;font-weight:400;">APPLICATION (5)</span>
<svg style="left:435px;top:614.1999999999999px;" width="16.4" height="16.4" viewBox="0 0 16.4 16.4"><path d="M8.2 0.4 V16 M0.4 8.2 H16" stroke="#49afd9" stroke-width="1.5" fill="none"/></svg>
<span id="t50" class="t" style="letter-spacing:0.881px;transform:scaleX(1.0300);left:460.7px;top:612.6px;line-height:20px;font-size:15.4px;color:#49afd9;font-weight:400;-webkit-text-stroke:0.45px currentColor;">ADD POLICY</span>
<svg style="left:610.8px;top:614.1999999999999px;" width="16.4" height="16.4" viewBox="0 0 16.4 16.4"><path d="M8.2 0.4 V16 M0.4 8.2 H16" stroke="#94a0a8" stroke-width="1.5" fill="none"/></svg>
<span id="t51" class="t" style="letter-spacing:0.837px;transform:scaleX(1.0300);left:636.5px;top:612.6px;line-height:20px;font-size:15.4px;color:#94a0a8;font-weight:400;-webkit-text-stroke:0.45px currentColor;">ADD RULE</span>
<svg style="left:768.8px;top:608.6px;" width="21.4" height="25.2" viewBox="0 0 23 27"><path d="M4.4 21.6 H1 V1 H17.4 V3.6" stroke="#94a0a8" stroke-width="1.5" fill="none" stroke-linejoin="round"/><rect x="5.2" y="4.6" width="16.4" height="21" rx="1" stroke="#94a0a8" stroke-width="1.8" fill="none"/></svg>
<span id="t52" class="t" style="letter-spacing:0.771px;transform:scaleX(1.0300);left:799px;top:612.6px;line-height:20px;font-size:15.4px;color:#94a0a8;font-weight:400;-webkit-text-stroke:0.45px currentColor;">CLONE</span>
<svg style="left:902px;top:609px;" width="24" height="24" viewBox="0 0 24 24"><path d="M7.4 1.4 L1.6 7.2 L7.4 13 M1.8 7.2 H14.6 Q21.6 7.6 21.6 14.6 Q21.6 21.4 14.6 21.8 H12" stroke="#94a0a8" stroke-width="1.5" fill="none"/></svg>
<span id="t53" class="t" style="letter-spacing:1.104px;transform:scaleX(1.0300);left:933.7px;top:612.6px;line-height:20px;font-size:15.4px;color:#94a0a8;font-weight:400;-webkit-text-stroke:0.45px currentColor;">UNDO</span>
<svg style="left:1029px;top:607px;" width="24" height="28" viewBox="0 0 24 28"><path d="M1 5.6 H22.4 M8 5.2 V1.6 H15.4 V5.2 M3.2 6 V26 H20.2 V6" stroke="#94a0a8" stroke-width="1.5" fill="none" stroke-linejoin="round"/><path d="M8.4 10.4 V21.4 M11.7 10.4 V21.4 M15 10.4 V21.4" stroke="#94a0a8" stroke-width="1.5" fill="none"/></svg>
<span id="t54" class="t" style="letter-spacing:0.491px;transform:scaleX(1.0300);left:1060.6px;top:612.6px;line-height:20px;font-size:15.4px;color:#94a0a8;font-weight:400;-webkit-text-stroke:0.45px currentColor;">DELETE</span>
<div style="left:1178.9px;top:622.8px;width:5px;height:5px;border-radius:50%;background:#49afd9"></div>
<div style="left:1189.1px;top:622.8px;width:5px;height:5px;border-radius:50%;background:#49afd9"></div>
<div style="left:1199.4px;top:622.8px;width:5px;height:5px;border-radius:50%;background:#49afd9"></div>
<span id="t55" class="t" style="transform:scaleX(1.0828);left:2089px;top:607.6px;line-height:23px;font-size:18px;color:#b3bcc2;font-weight:400;">Filter by Name, Path and more</span>
<div style="left:2080.6px;top:635.5px;width:348.4px;height:1.3px;background:#5f6e79;"></div>
<div style="left:2442px;top:612.8px;width:29.6px;height:1.5px;background:#3f4d56;"></div>
<div style="left:2447px;top:618.4px;width:19.6px;height:1.5px;background:#3f4d56;"></div>
<div style="left:2452px;top:624px;width:9.6px;height:1.5px;background:#3f4d56;"></div>
<div style="left:433px;top:647.4px;width:2043px;height:1193.6px;border:2px solid #41505c;border-radius:3px"></div>
<div style="left:434.6px;top:649px;width:2042.6px;height:51px;background:#1b2932;"></div>
<div style="left:434.6px;top:699.1px;width:2042.6px;height:2.8px;background:#566978;"></div>
<div style="left:537.9px;top:657px;width:1.3px;height:34.6px;background:#4b5b66;"></div>
<div style="left:737.4px;top:657px;width:1.3px;height:34.6px;background:#4b5b66;"></div>
<div style="left:908.4px;top:657px;width:1.3px;height:34.6px;background:#4b5b66;"></div>
<div style="left:1124.9px;top:657px;width:1.3px;height:34.6px;background:#4b5b66;"></div>
<div style="left:1377.1000000000001px;top:657px;width:1.3px;height:34.6px;background:#4b5b66;"></div>
<div style="left:1597.8000000000002px;top:657px;width:1.3px;height:34.6px;background:#4b5b66;"></div>
<div style="left:1877.9px;top:657px;width:1.3px;height:34.6px;background:#4b5b66;"></div>
<div style="left:2119.1px;top:657px;width:1.3px;height:34.6px;background:#4b5b66;"></div>
<div style="left:2323.8px;top:657px;width:1.3px;height:34.6px;background:#4b5b66;"></div>
<span id="t56" class="t" style="transform:scaleX(1.0659);left:556px;top:663.6px;line-height:20px;font-size:15.5px;color:#c9d3d9;font-weight:700;">Name</span>
<span id="t57" class="t" style="letter-spacing:0.100px;left:756px;top:663.6px;line-height:20px;font-size:15.5px;color:#c9d3d9;font-weight:700;">ID</span>
<span id="t58" class="t" style="letter-spacing:0.171px;left:926.2px;top:663.6px;line-height:20px;font-size:15.5px;color:#c9d3d9;font-weight:700;">Sources</span>
<span id="t59" class="t" style="transform:scaleX(1.0504);left:1143.3px;top:663.6px;line-height:20px;font-size:15.5px;color:#c9d3d9;font-weight:700;">Destinations</span>
<span id="t60" class="t" style="transform:scaleX(1.0395);left:1395px;top:663.6px;line-height:20px;font-size:15.5px;color:#c9d3d9;font-weight:700;">Services</span>
<span id="t61" class="t" style="transform:scaleX(1.0601);left:1616px;top:663.6px;line-height:20px;font-size:15.5px;color:#c9d3d9;font-weight:700;">Context Profiles</span>
<span id="t62" class="t" style="transform:scaleX(1.0882);left:1896.4px;top:663.6px;line-height:20px;font-size:15.5px;color:#c9d3d9;font-weight:700;">Applied To</span>
<span id="t63" class="t" style="transform:scaleX(1.0535);left:2137.2px;top:663.6px;line-height:20px;font-size:15.5px;color:#c9d3d9;font-weight:700;">Action</span>
<div style="left:434.6px;top:701.4px;width:2042.6px;height:57.2px;background:#335064;"></div>
<div style="left:434.6px;top:758.2px;width:2042.6px;height:1.5px;background:#50667a;"></div>
<div style="left:453.6px;top:719.7px;width:4.4px;height:4.4px;border-radius:50%;background:#49afd9"></div>
<div style="left:453.6px;top:727.9px;width:4.4px;height:4.4px;border-radius:50%;background:#49afd9"></div>
<div style="left:453.6px;top:736.1px;width:4.4px;height:4.4px;border-radius:50%;background:#49afd9"></div>
<svg style="left:476.6px;top:725.2px;" width="18" height="12" viewBox="0 0 18 12"><path d="M2 1.8 L8.6 8.6 L15.2 1.8" stroke="#e9ecef" stroke-width="2" fill="none"/></svg>
<div style="left:551.8px;top:717.9px;width:19.4px;height:19.4px;border:1.5px solid #aebbc4;border-radius:5px"></div>
<span id="t64" class="t" style="transform:scaleX(1.0763);left:606.2px;top:719.3px;line-height:21px;font-size:16.4px;color:#ffffff;font-weight:400;-webkit-text-stroke:0.28px currentColor;">debian10</span>
<span id="t65" class="t" style="transform:scaleX(1.0675);left:756px;top:719.5px;line-height:21px;font-size:16.4px;color:#f0f3f5;font-weight:400;-webkit-text-stroke:0.25px currentColor;">(2)</span>
<span id="t66" class="t" style="letter-spacing:0.236px;transform:scaleX(1.1100);left:855px;top:718.7px;line-height:21px;font-size:16.4px;color:#f0f3f5;font-weight:400;-webkit-text-stroke:0.2px currentColor;">Applied To</span>
<span id="t67" class="t" style="letter-spacing:0.241px;transform:scaleX(1.0500);left:967.9px;top:720.5px;line-height:21px;font-size:16.4px;color:#a9b6be;font-weight:400;">DFW</span>
<div style="left:2251.8px;top:720.0px;width:20px;height:20px;border-radius:50%;background:#62b716"></div>
<span id="t68" class="t" style="transform:scaleX(1.0703);left:2283.4px;top:716.7px;line-height:24px;font-size:18.4px;color:#49afd9;font-weight:400;">Success</span>
<svg style="left:2362.1px;top:718.4px;" width="22.8" height="22.8" viewBox="0 0 22.8 22.8"><path d="M16.16 5.73 A7.4 7.4 0 1 0 18.77 10.76" stroke="#49afd9" stroke-width="1.4" fill="none"/><path d="M19.10 3.20 V9.18 H13.62" stroke="#49afd9" stroke-width="1.4" fill="none"/></svg>
<svg style="left:2401.4px;top:717.4px;" width="23.2" height="23.2" viewBox="0 0 23.2 23.2"><circle cx="11.6" cy="11.6" r="9.6" stroke="#49afd9" stroke-width="1.3" fill="none"/><path d="M9.0 5.0 A7.2 7.2 0 0 0 9.0 18.2" stroke="#49afd9" stroke-width="1.2" fill="none"/><path d="M12.0 6.199999999999999 V12.0 L15.6 14.8" stroke="#49afd9" stroke-width="1.4" fill="none"/></svg>
<svg style="left:2439.3px;top:717.8px;" width="22.4" height="22.4" viewBox="0 0 22.4 22.4"><path d="M9.42 4.05 L9.68 1.62 L12.72 1.62 L12.98 4.05 L15.00 4.88 L16.90 3.35 L19.05 5.50 L17.52 7.40 L18.35 9.42 L20.78 9.68 L20.78 12.72 L18.35 12.98 L17.52 15.00 L19.05 16.90 L16.90 19.05 L15.00 17.52 L12.98 18.35 L12.72 20.78 L9.68 20.78 L9.42 18.35 L7.40 17.52 L5.50 19.05 L3.35 16.90 L4.88 15.00 L4.05 12.98 L1.62 12.72 L1.62 9.68 L4.05 9.42 L4.88 7.40 L3.35 5.50 L5.50 3.35 L7.40 4.88 Z" stroke="#49afd9" stroke-width="1.5" fill="none" stroke-linejoin="round"/><circle cx="11.2" cy="11.2" r="3.59" stroke="#49afd9" stroke-width="1.5" fill="none"/></svg>
<div style="left:453.6px;top:776.6px;width:4.4px;height:4.4px;border-radius:50%;background:#49afd9"></div>
<div style="left:453.6px;top:784.8px;width:4.4px;height:4.4px;border-radius:50%;background:#49afd9"></div>
<div style="left:453.6px;top:793.0px;width:4.4px;height:4.4px;border-radius:50%;background:#49afd9"></div>
<div style="left:546.4px;top:774.9px;width:19.4px;height:19.4px;border:1.5px solid #aebbc4;border-radius:5px"></div>
<span id="t69" class="t" style="transform:scaleX(1.0441);left:595px;top:775.5px;line-height:23px;font-size:17.4px;color:#f2f4f6;font-weight:400;">dns-trace</span>
<span id="t70" class="t" style="letter-spacing:0.075px;transform:scaleX(1.1100);left:794.3px;top:776.6px;line-height:22px;font-size:16.8px;color:#f2f4f6;font-weight:400;">4076</span>
<span id="t71" class="t" style="transform:scaleX(1.0807);left:973.4px;top:771.8px;line-height:22px;font-size:16.6px;color:#aebbc3;font-weight:400;">Any</span>
<span id="t72" class="t" style="transform:scaleX(1.1016);left:1190.5px;top:771.8px;line-height:22px;font-size:16.6px;color:#aebbc3;font-weight:400;">Any</span>
<svg style="left:1444.1000000000001px;top:772.6999999999999px;" width="23.2" height="23.2" viewBox="0 0 23.2 23.2"><path d="M9.74 3.84 L9.63 1.69 A2.63 2.63 0 0 1 13.57 1.69 L13.46 3.84 L15.77 4.80 L17.21 3.20 A2.63 2.63 0 0 1 20.00 5.99 L18.40 7.43 L19.36 9.74 L21.51 9.63 A2.63 2.63 0 0 1 21.51 13.57 L19.36 13.46 L18.40 15.77 L20.00 17.21 A2.63 2.63 0 0 1 17.21 20.00 L15.77 18.40 L13.46 19.36 L13.57 21.51 A2.63 2.63 0 0 1 9.63 21.51 L9.74 19.36 L7.43 18.40 L5.99 20.00 A2.63 2.63 0 0 1 3.20 17.21 L4.80 15.77 L3.84 13.46 L1.69 13.57 A2.63 2.63 0 0 1 1.69 9.63 L3.84 9.74 L4.80 7.43 L3.20 5.99 A2.63 2.63 0 0 1 5.99 3.20 L7.43 4.80 Z" stroke="#2eb4d6" stroke-width="1.5" fill="none" stroke-linejoin="round"/></svg>
<span id="t73" class="t" style="transform:scaleX(1.0474);left:1474.5px;top:775.0px;line-height:20px;font-size:15.6px;color:#e8ecef;font-weight:400;">DNS</span>
<svg style="left:1444.1000000000001px;top:808.9px;" width="23.2" height="23.2" viewBox="0 0 23.2 23.2"><path d="M9.74 3.84 L9.63 1.69 A2.63 2.63 0 0 1 13.57 1.69 L13.46 3.84 L15.77 4.80 L17.21 3.20 A2.63 2.63 0 0 1 20.00 5.99 L18.40 7.43 L19.36 9.74 L21.51 9.63 A2.63 2.63 0 0 1 21.51 13.57 L19.36 13.46 L18.40 15.77 L20.00 17.21 A2.63 2.63 0 0 1 17.21 20.00 L15.77 18.40 L13.46 19.36 L13.57 21.51 A2.63 2.63 0 0 1 9.63 21.51 L9.74 19.36 L7.43 18.40 L5.99 20.00 A2.63 2.63 0 0 1 3.20 17.21 L4.80 15.77 L3.84 13.46 L1.69 13.57 A2.63 2.63 0 0 1 1.69 9.63 L3.84 9.74 L4.80 7.43 L3.20 5.99 A2.63 2.63 0 0 1 5.99 3.20 L7.43 4.80 Z" stroke="#2eb4d6" stroke-width="1.5" fill="none" stroke-linejoin="round"/></svg>
<span id="t74" class="t" style="letter-spacing:0.413px;transform:scaleX(1.0500);left:1474.5px;top:811.2px;line-height:20px;font-size:15.6px;color:#e8ecef;font-weight:400;">DNS-UDP</span>
<svg style="left:1665.6px;top:773px;" width="23" height="23" viewBox="0 0 23 23"><path d="M12.4 21 H1 V0.8 H16.6 V8.4" stroke="#2eb4d6" stroke-width="1.5" fill="none" stroke-linejoin="round"/></svg>
<svg style="left:1672.2999999999997px;top:780.5px;" width="15.8" height="15.8" viewBox="0 0 15.8 15.8"><path d="M6.73 3.18 L6.90 1.58 L8.90 1.58 L9.07 3.18 L10.41 3.73 L11.66 2.72 L13.08 4.14 L12.07 5.39 L12.62 6.73 L14.22 6.90 L14.22 8.90 L12.62 9.07 L12.07 10.41 L13.08 11.66 L11.66 13.08 L10.41 12.07 L9.07 12.62 L8.90 14.22 L6.90 14.22 L6.73 12.62 L5.39 12.07 L4.14 13.08 L2.72 11.66 L3.73 10.41 L3.18 9.07 L1.58 8.90 L1.58 6.90 L3.18 6.73 L3.73 5.39 L2.72 4.14 L4.14 2.72 L5.39 3.73 Z" stroke="#2eb4d6" stroke-width="1.3" fill="none" stroke-linejoin="round"/><circle cx="7.9" cy="7.9" r="2.37" stroke="#2eb4d6" stroke-width="1.3" fill="none"/></svg>
<span id="t75" class="t" style="letter-spacing:0.293px;transform:scaleX(1.0500);left:1696px;top:775.0px;line-height:20px;font-size:15.6px;color:#e8ecef;font-weight:400;">DNS</span>
<svg style="left:1947px;top:773.8px;" width="21" height="21" viewBox="0 0 21 21"><rect x="0.9" y="0.9" width="6.4" height="6.4" rx="1.2" stroke="#2eb4d6" stroke-width="1.5" fill="none"/><rect x="13.5" y="0.9" width="6.4" height="6.4" rx="1.2" stroke="#2eb4d6" stroke-width="1.5" fill="none"/><rect x="0.9" y="13.4" width="6.4" height="6.4" rx="1.2" stroke="#2eb4d6" stroke-width="1.5" fill="none"/><rect x="13.5" y="13.4" width="6.4" height="6.4" rx="1.2" stroke="#2eb4d6" stroke-width="1.5" fill="none"/><path d="M9.2 4.1 H11.6 M9.2 16.6 H11.6 M4.1 9.4 V11.4 M16.7 9.4 V11.4" stroke="#2eb4d6" stroke-width="1.5" fill="none"/></svg>
<span id="t76" class="t" style="letter-spacing:0.416px;transform:scaleX(1.1100);left:1976px;top:775.0px;line-height:20px;font-size:15.6px;color:#e8ecef;font-weight:400;">allow-debian-repo</span>
<div style="left:2191.7000000000003px;top:778.1px;width:19.2px;height:19.2px;border-radius:50%;background:#62b716"></div>
<span id="t77" class="t" style="letter-spacing:0.379px;transform:scaleX(1.1100);left:2236px;top:776.1px;line-height:22px;font-size:16.9px;color:#eef1f3;font-weight:400;">Allow</span>
<svg style="left:2297.8px;top:782px;" width="16" height="10" viewBox="0 0 16 10"><path d="M1.6 1.6 L7.2 7.4 L12.8 1.6" stroke="#a7b1b8" stroke-width="1.3" fill="none"/></svg>
<div style="left:2226.9px;top:802.2px;width:93.5px;height:1.8px;background:#b6c0c7;"></div>
<div style="left:2364.8px;top:770.8px;width:46.2px;height:26.2px;border-radius:13.1px;background:#60a421"></div>
<div style="left:2388.4px;top:774px;width:20px;height:20px;border-radius:50%;background:#ffffff"></div>
<svg style="left:2432.9px;top:776.3px;" width="22.2" height="22.2" viewBox="0 0 22.2 22.2"><path d="M9.34 4.02 L9.60 1.62 L12.60 1.62 L12.86 4.02 L14.86 4.85 L16.74 3.33 L18.87 5.46 L17.35 7.34 L18.18 9.34 L20.58 9.60 L20.58 12.60 L18.18 12.86 L17.35 14.86 L18.87 16.74 L16.74 18.87 L14.86 17.35 L12.86 18.18 L12.60 20.58 L9.60 20.58 L9.34 18.18 L7.34 17.35 L5.46 18.87 L3.33 16.74 L4.85 14.86 L4.02 12.86 L1.62 12.60 L1.62 9.60 L4.02 9.34 L4.85 7.34 L3.33 5.46 L5.46 3.33 L7.34 4.85 Z" stroke="#49afd9" stroke-width="1.5" fill="none" stroke-linejoin="round"/><circle cx="11.1" cy="11.1" r="3.55" stroke="#49afd9" stroke-width="1.5" fill="none"/></svg>
<div style="left:2465.2px;top:778px;width:13.4px;height:17px;overflow:hidden"><svg style="left:0;top:0" width="20" height="17" viewBox="0 0 20 17"><rect x="0.7" y="0.7" width="17" height="15.4" stroke="#49afd9" stroke-width="1.4" fill="none"/><path d="M2.6 11.6 L6.4 7 L9 9.8 L12.4 5.4 L16 9" stroke="#49afd9" stroke-width="1.3" fill="none"/></svg></div>
<div style="left:435.6px;top:764px;width:1898.7px;height:70.6px;border:4px solid #e8424e;border-radius:1px"></div>
<div style="left:434.6px;top:845.2px;width:2042.6px;height:1.4px;background:#3d4c58;"></div>
<div style="left:453.6px;top:864.6px;width:4.4px;height:4.4px;border-radius:50%;background:#49afd9"></div>
<div style="left:453.6px;top:872.8px;width:4.4px;height:4.4px;border-radius:50%;background:#49afd9"></div>
<div style="left:453.6px;top:881.0px;width:4.4px;height:4.4px;border-radius:50%;background:#49afd9"></div>
<div style="left:546.4px;top:862.9px;width:19.4px;height:19.4px;border:1.5px solid #aebbc4;border-radius:5px"></div>
<span id="t78" class="t" style="transform:scaleX(1.0800);left:595px;top:863.5px;line-height:23px;font-size:17.4px;color:#f2f4f6;font-weight:400;">fqdn-filter</span>
<span id="t79" class="t" style="letter-spacing:0.075px;transform:scaleX(1.1100);left:794.3px;top:864.6px;line-height:22px;font-size:16.8px;color:#f2f4f6;font-weight:400;">4077</span>
<span id="t80" class="t" style="transform:scaleX(1.0807);left:973.4px;top:859.8px;line-height:22px;font-size:16.6px;color:#aebbc3;font-weight:400;">Any</span>
<span id="t81" class="t" style="transform:scaleX(1.1016);left:1190.5px;top:859.8px;line-height:22px;font-size:16.6px;color:#aebbc3;font-weight:400;">Any</span>
<svg style="left:1444.1000000000001px;top:860.6999999999999px;" width="23.2" height="23.2" viewBox="0 0 23.2 23.2"><path d="M9.74 3.84 L9.63 1.69 A2.63 2.63 0 0 1 13.57 1.69 L13.46 3.84 L15.77 4.80 L17.21 3.20 A2.63 2.63 0 0 1 20.00 5.99 L18.40 7.43 L19.36 9.74 L21.51 9.63 A2.63 2.63 0 0 1 21.51 13.57 L19.36 13.46 L18.40 15.77 L20.00 17.21 A2.63 2.63 0 0 1 17.21 20.00 L15.77 18.40 L13.46 19.36 L13.57 21.51 A2.63 2.63 0 0 1 9.63 21.51 L9.74 19.36 L7.43 18.40 L5.99 20.00 A2.63 2.63 0 0 1 3.20 17.21 L4.80 15.77 L3.84 13.46 L1.69 13.57 A2.63 2.63 0 0 1 1.69 9.63 L3.84 9.74 L4.80 7.43 L3.20 5.99 A2.63 2.63 0 0 1 5.99 3.20 L7.43 4.80 Z" stroke="#2eb4d6" stroke-width="1.5" fill="none" stroke-linejoin="round"/></svg>
<span id="t82" class="t" style="letter-spacing:0.173px;transform:scaleX(1.0500);left:1474.5px;top:863.0px;line-height:20px;font-size:15.6px;color:#e8ecef;font-weight:400;">HTTP</span>
<svg style="left:1665.6px;top:861.0px;" width="23" height="23" viewBox="0 0 23 23"><path d="M12.4 21 H1 V0.8 H16.6 V8.4" stroke="#2eb4d6" stroke-width="1.5" fill="none" stroke-linejoin="round"/></svg>
<svg style="left:1672.2999999999997px;top:868.5px;" width="15.8" height="15.8" viewBox="0 0 15.8 15.8"><path d="M6.73 3.18 L6.90 1.58 L8.90 1.58 L9.07 3.18 L10.41 3.73 L11.66 2.72 L13.08 4.14 L12.07 5.39 L12.62 6.73 L14.22 6.90 L14.22 8.90 L12.62 9.07 L12.07 10.41 L13.08 11.66 L11.66 13.08 L10.41 12.07 L9.07 12.62 L8.90 14.22 L6.90 14.22 L6.73 12.62 L5.39 12.07 L4.14 13.08 L2.72 11.66 L3.73 10.41 L3.18 9.07 L1.58 8.90 L1.58 6.90 L3.18 6.73 L3.73 5.39 L2.72 4.14 L4.14 2.72 L5.39 3.73 Z" stroke="#2eb4d6" stroke-width="1.3" fill="none" stroke-linejoin="round"/><circle cx="7.9" cy="7.9" r="2.37" stroke="#2eb4d6" stroke-width="1.3" fill="none"/></svg>
<span id="t83" class="t" style="letter-spacing:0.716px;transform:scaleX(1.1100);left:1696px;top:863.0px;line-height:20px;font-size:15.6px;color:#e8ecef;font-weight:400;">debrepo</span>
<svg style="left:1947px;top:861.8px;" width="21" height="21" viewBox="0 0 21 21"><rect x="0.9" y="0.9" width="6.4" height="6.4" rx="1.2" stroke="#2eb4d6" stroke-width="1.5" fill="none"/><rect x="13.5" y="0.9" width="6.4" height="6.4" rx="1.2" stroke="#2eb4d6" stroke-width="1.5" fill="none"/><rect x="0.9" y="13.4" width="6.4" height="6.4" rx="1.2" stroke="#2eb4d6" stroke-width="1.5" fill="none"/><rect x="13.5" y="13.4" width="6.4" height="6.4" rx="1.2" stroke="#2eb4d6" stroke-width="1.5" fill="none"/><path d="M9.2 4.1 H11.6 M9.2 16.6 H11.6 M4.1 9.4 V11.4 M16.7 9.4 V11.4" stroke="#2eb4d6" stroke-width="1.5" fill="none"/></svg>
<span id="t84" class="t" style="letter-spacing:0.416px;transform:scaleX(1.1100);left:1976px;top:863.0px;line-height:20px;font-size:15.6px;color:#e8ecef;font-weight:400;">allow-debian-repo</span>
<div style="left:2191.7000000000003px;top:866.1px;width:19.2px;height:19.2px;border-radius:50%;background:#62b716"></div>
<span id="t85" class="t" style="letter-spacing:0.379px;transform:scaleX(1.1100);left:2236px;top:864.1px;line-height:22px;font-size:16.9px;color:#eef1f3;font-weight:400;">Allow</span>
<svg style="left:2297.8px;top:870.0px;" width="16" height="10" viewBox="0 0 16 10"><path d="M1.6 1.6 L7.2 7.4 L12.8 1.6" stroke="#a7b1b8" stroke-width="1.3" fill="none"/></svg>
<div style="left:2226.9px;top:890.2px;width:93.5px;height:1.8px;background:#b6c0c7;"></div>
<div style="left:2364.8px;top:858.8px;width:46.2px;height:26.2px;border-radius:13.1px;background:#60a421"></div>
<div style="left:2388.4px;top:862.0px;width:20px;height:20px;border-radius:50%;background:#ffffff"></div>
<svg style="left:2432.9px;top:864.3px;" width="22.2" height="22.2" viewBox="0 0 22.2 22.2"><path d="M9.34 4.02 L9.60 1.62 L12.60 1.62 L12.86 4.02 L14.86 4.85 L16.74 3.33 L18.87 5.46 L17.35 7.34 L18.18 9.34 L20.58 9.60 L20.58 12.60 L18.18 12.86 L17.35 14.86 L18.87 16.74 L16.74 18.87 L14.86 17.35 L12.86 18.18 L12.60 20.58 L9.60 20.58 L9.34 18.18 L7.34 17.35 L5.46 18.87 L3.33 16.74 L4.85 14.86 L4.02 12.86 L1.62 12.60 L1.62 9.60 L4.02 9.34 L4.85 7.34 L3.33 5.46 L5.46 3.33 L7.34 4.85 Z" stroke="#49afd9" stroke-width="1.5" fill="none" stroke-linejoin="round"/><circle cx="11.1" cy="11.1" r="3.55" stroke="#49afd9" stroke-width="1.5" fill="none"/></svg>
<div style="left:2465.2px;top:866.0px;width:13.4px;height:17px;overflow:hidden"><svg style="left:0;top:0" width="20" height="17" viewBox="0 0 20 17"><rect x="0.7" y="0.7" width="17" height="15.4" stroke="#49afd9" stroke-width="1.4" fill="none"/><path d="M2.6 11.6 L6.4 7 L9 9.8 L12.4 5.4 L16 9" stroke="#49afd9" stroke-width="1.3" fill="none"/></svg></div>
<div style="left:434.6px;top:910.9px;width:2042.6px;height:57.2px;background:#335064;"></div>
<div style="left:434.6px;top:967.7px;width:2042.6px;height:1.5px;background:#50667a;"></div>
<div style="left:453.6px;top:929.2px;width:4.4px;height:4.4px;border-radius:50%;background:#49afd9"></div>
<div style="left:453.6px;top:937.4px;width:4.4px;height:4.4px;border-radius:50%;background:#49afd9"></div>
<div style="left:453.6px;top:945.6px;width:4.4px;height:4.4px;border-radius:50%;background:#49afd9"></div>
<svg style="left:478.6px;top:932.7px;" width="12" height="18" viewBox="0 0 12 18"><path d="M2 1.6 L9.2 9 L2 16.4" stroke="#e9ecef" stroke-width="2" fill="none"/></svg>
<div style="left:551.8px;top:927.4px;width:19.4px;height:19.4px;border:1.5px solid #aebbc4;border-radius:5px"></div>
<span id="t86" class="t" style="transform:scaleX(1.0665);left:606.2px;top:928.8px;line-height:21px;font-size:16.4px;color:#a9b6be;font-weight:400;-webkit-text-stroke:0.28px currentColor;">Default Layer3 S...</span>
<span id="t87" class="t" style="transform:scaleX(1.0675);left:782px;top:929.0px;line-height:21px;font-size:16.4px;color:#f0f3f5;font-weight:400;-webkit-text-stroke:0.25px currentColor;">(3)</span>
<span id="t88" class="t" style="letter-spacing:0.236px;transform:scaleX(1.1100);left:855px;top:928.2px;line-height:21px;font-size:16.4px;color:#f0f3f5;font-weight:400;-webkit-text-stroke:0.2px currentColor;">Applied To</span>
<span id="t89" class="t" style="letter-spacing:0.241px;transform:scaleX(1.0500);left:967.9px;top:930.0px;line-height:21px;font-size:16.4px;color:#a9b6be;font-weight:400;">DFW</span>
<div style="left:2251.8px;top:929.5px;width:20px;height:20px;border-radius:50%;background:#62b716"></div>
<span id="t90" class="t" style="transform:scaleX(1.0703);left:2283.4px;top:926.2px;line-height:24px;font-size:18.4px;color:#49afd9;font-weight:400;">Success</span>
<svg style="left:2362.1px;top:927.9px;" width="22.8" height="22.8" viewBox="0 0 22.8 22.8"><path d="M16.16 5.73 A7.4 7.4 0 1 0 18.77 10.76" stroke="#49afd9" stroke-width="1.4" fill="none"/><path d="M19.10 3.20 V9.18 H13.62" stroke="#49afd9" stroke-width="1.4" fill="none"/></svg>
<svg style="left:2401.4px;top:926.9px;" width="23.2" height="23.2" viewBox="0 0 23.2 23.2"><circle cx="11.6" cy="11.6" r="9.6" stroke="#8a98a1" stroke-width="1.3" fill="none"/><path d="M9.0 5.0 A7.2 7.2 0 0 0 9.0 18.2" stroke="#8a98a1" stroke-width="1.2" fill="none"/><path d="M12.0 6.199999999999999 V12.0 L15.6 14.8" stroke="#8a98a1" stroke-width="1.4" fill="none"/></svg>
<svg style="left:2439.3px;top:927.3px;" width="22.4" height="22.4" viewBox="0 0 22.4 22.4"><path d="M9.42 4.05 L9.68 1.62 L12.72 1.62 L12.98 4.05 L15.00 4.88 L16.90 3.35 L19.05 5.50 L17.52 7.40 L18.35 9.42 L20.78 9.68 L20.78 12.72 L18.35 12.98 L17.52 15.00 L19.05 16.90 L16.90 19.05 L15.00 17.52 L12.98 18.35 L12.72 20.78 L9.68 20.78 L9.42 18.35 L7.40 17.52 L5.50 19.05 L3.35 16.90 L4.88 15.00 L4.05 12.98 L1.62 12.72 L1.62 9.68 L4.05 9.42 L4.88 7.40 L3.35 5.50 L5.50 3.35 L7.40 4.88 Z" stroke="#49afd9" stroke-width="1.5" fill="none" stroke-linejoin="round"/><circle cx="11.2" cy="11.2" r="3.59" stroke="#49afd9" stroke-width="1.5" fill="none"/></svg>
<div style="left:434.6px;top:1792.6px;width:2042.6px;height:2.6px;background:#566878;"></div>
<svg style="left:450.7px;top:1805.7px;" width="26.6" height="26.6" viewBox="0 0 26.6 26.6"><path d="M19.28 6.18 A9.3 9.3 0 1 0 22.56 12.49" stroke="#49afd9" stroke-width="1.5" fill="none"/><path d="M22.90 3.20 V10.51 H16.09" stroke="#49afd9" stroke-width="1.5" fill="none"/></svg>
<span id="t91" class="t" style="letter-spacing:0.008px;transform:scaleX(1.0300);left:481.2px;top:1811.2px;line-height:20px;font-size:15.4px;color:#49afd9;font-weight:400;-webkit-text-stroke:0.45px currentColor;">REFRESH</span>
<span id="t92" class="t" style="letter-spacing:0.137px;left:2353.2px;top:1808.3px;line-height:23px;font-size:17.4px;color:#aebbc3;font-weight:400;">2 of 2 Policies</span>
</div>
</body></html>
